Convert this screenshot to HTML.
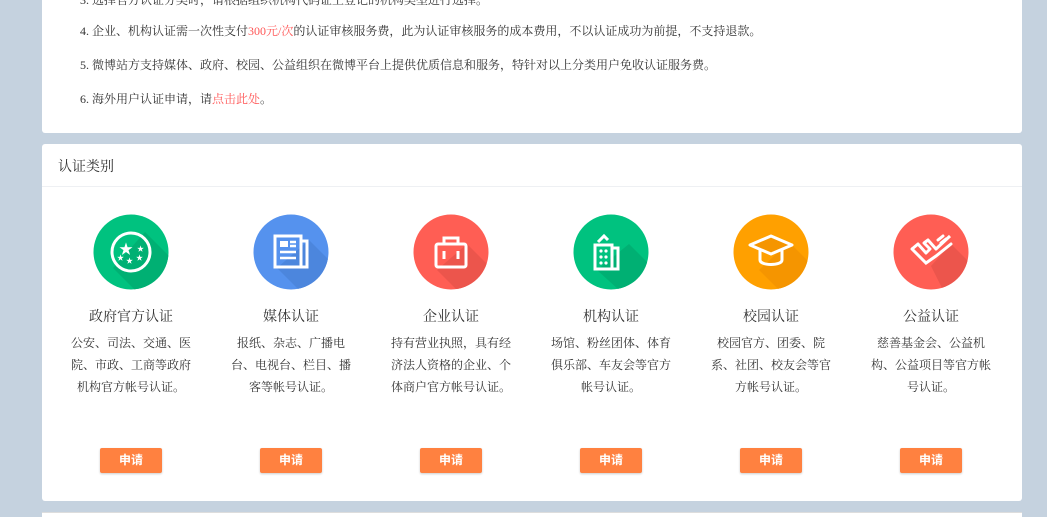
<!DOCTYPE html>
<html><head><meta charset="utf-8"><style>
*{margin:0;padding:0;box-sizing:border-box}
html,body{width:1047px;height:517px;overflow:hidden}
body{background:#c5d2df;font-family:"Liberation Serif","Noto Serif CJK SC",serif;color:#333;position:relative}
.p1{position:absolute;left:42px;top:-10px;width:980px;height:143px;background:#fff;border-radius:3px}
.p1 p{position:absolute;left:38px;font-size:12px;line-height:14px;white-space:nowrap}
.red{color:#f55}
.p2{position:absolute;left:42px;top:144px;width:980px;height:357px;background:#fff;border-radius:3px}
.hd{height:43px;border-bottom:1px solid #eef0f3;font-size:14px;padding:12px 0 0 16px;color:#333}
.col{position:absolute;top:70px;width:160px;height:270px;text-align:center}
.col svg{display:block;margin:0 auto}
.t{font-size:14px;margin-top:20px;line-height:16px;color:#333}
.d{font-size:12px;line-height:22px;margin:6px auto 0;width:122px;color:#333}
.btn{position:absolute;top:234px;left:49px;width:62px;height:25px;background:#ff8140;color:#fff;font-size:12px;font-weight:bold;line-height:25px;text-align:center;border-radius:2px;box-shadow:0 1px 2px rgba(0,0,0,.2);font-family:"Liberation Sans","Noto Sans CJK SC",sans-serif}
.p3{position:absolute;left:42px;top:512px;width:980px;height:5px;background:#fff;border-top:1px solid #ddd}
</style></head><body>
<div class="p1">
<p style="top:3px">3. 选择官方认证分类时，请根据组织机构代码证上登记的机构类型进行选择。</p>
<p style="top:34px">4. 企业、机构认证需一次性支付<span class="red">300元/次</span>的认证审核服务费，此为认证审核服务的成本费用，不以认证成功为前提，不支持退款。</p>
<p style="top:68px">5. 微博站方支持媒体、政府、校园、公益组织在微博平台上提供优质信息和服务，特针对以上分类用户免收认证服务费。</p>
<p style="top:102px">6. 海外用户认证申请，请<span class="red">点击此处</span>。</p>
</div>
<div class="p2">
<div class="hd">认证类别</div>

<div class="col" style="left:9px">
<svg width="76" height="76" viewBox="0 0 76 76"><defs><clipPath id="c1"><circle cx="38" cy="38" r="37.5"/></clipPath></defs><circle cx="38" cy="38" r="37.5" fill="#00c27f"/><polygon clip-path="url(#c1)" points="52,18 76,42 76,76 42,76 20,54" fill="#00b073"/><circle cx="38" cy="38" r="19" fill="none" stroke="#fff" stroke-width="3"/><text x="33" y="40" font-size="14" fill="#fff" text-anchor="middle">★</text><text x="44" y="37" font-size="7" fill="#fff">★</text><text x="43" y="46" font-size="7" fill="#fff">★</text><text x="33" y="49" font-size="7" fill="#fff">★</text><text x="24" y="46" font-size="7" fill="#fff">★</text></svg>
<div class="t">政府官方认证</div><div class="d">公安、司法、交通、医院、市政、工商等政府机构官方帐号认证。</div><div class="btn">申请</div></div>

<div class="col" style="left:169px">
<svg width="76" height="76" viewBox="0 0 76 76"><defs><clipPath id="c2"><circle cx="38" cy="38" r="37.5"/></clipPath></defs><circle cx="38" cy="38" r="37.5" fill="#5592ee"/><polygon clip-path="url(#c2)" points="56,26 76,46 76,76 46,76 24,54" fill="#4c86dd"/><rect x="22" y="22" width="26" height="31" fill="none" stroke="#fff" stroke-width="3"/><path d="M48 27h6v26h-6" fill="none" stroke="#fff" stroke-width="3"/><rect x="27" y="27" width="8" height="6" fill="#fff"/><path d="M37 28h6M37 32h6M27 38h16M27 44h16" stroke="#fff" stroke-width="2.5"/></svg>
<div class="t">媒体认证</div><div class="d">报纸、杂志、广播电台、电视台、栏目、播客等帐号认证。</div><div class="btn">申请</div></div>

<div class="col" style="left:329px">
<svg width="76" height="76" viewBox="0 0 76 76"><defs><clipPath id="c3"><circle cx="38" cy="38" r="37.5"/></clipPath></defs><circle cx="38" cy="38" r="37.5" fill="#ff5e54"/><polygon clip-path="url(#c3)" points="54,30 76,52 76,76 44,76 24,56" fill="#ec554c"/><rect x="23" y="30" width="30" height="23" rx="2" fill="none" stroke="#fff" stroke-width="3"/><path d="M31 30v-6h14v6" fill="none" stroke="#fff" stroke-width="3"/><path d="M31 37v8M45 37v8" stroke="#fff" stroke-width="3"/></svg>
<div class="t">企业认证</div><div class="d">持有营业执照，具有经济法人资格的企业、个体商户官方帐号认证。</div><div class="btn">申请</div></div>

<div class="col" style="left:489px">
<svg width="76" height="76" viewBox="0 0 76 76"><defs><clipPath id="c4"><circle cx="38" cy="38" r="37.5"/></clipPath></defs><circle cx="38" cy="38" r="37.5" fill="#00c27f"/><polygon clip-path="url(#c4)" points="56,30 76,50 76,76 46,76 24,56" fill="#00b073"/><rect x="22" y="31" width="17" height="24" fill="none" stroke="#fff" stroke-width="3"/><path d="M25 28l6-6 4 4" fill="none" stroke="#fff" stroke-width="3"/><path d="M39 34h6v21h-6" fill="none" stroke="#fff" stroke-width="3"/><g fill="#fff"><circle cx="28" cy="37" r="1.6"/><circle cx="33" cy="37" r="1.6"/><circle cx="28" cy="43" r="1.6"/><circle cx="33" cy="43" r="1.6"/><circle cx="28" cy="49" r="1.6"/><circle cx="33" cy="49" r="1.6"/></g></svg>
<div class="t">机构认证</div><div class="d">场馆、粉丝团体、体育俱乐部、车友会等官方帐号认证。</div><div class="btn">申请</div></div>

<div class="col" style="left:649px">
<svg width="76" height="76" viewBox="0 0 76 76"><defs><clipPath id="c5"><circle cx="38" cy="38" r="37.5"/></clipPath></defs><circle cx="38" cy="38" r="37.5" fill="#ffa000"/><polygon clip-path="url(#c5)" points="56,28 76,48 76,76 46,76 26,56" fill="#f59500"/><path d="M17 31l21-9 21 9-21 9z" fill="#f59500" stroke="#fff" stroke-width="3" stroke-linejoin="round"/><path d="M27 36v10c0 6 22 6 22 0V36" fill="none" stroke="#fff" stroke-width="3"/></svg>
<div class="t">校园认证</div><div class="d">校园官方、团委、院系、社团、校友会等官方帐号认证。</div><div class="btn">申请</div></div>

<div class="col" style="left:809px">
<svg width="76" height="76" viewBox="0 0 76 76"><defs><clipPath id="c6"><circle cx="38" cy="38" r="37.5"/></clipPath></defs><circle cx="38" cy="38" r="37.5" fill="#ff5e54"/><polygon clip-path="url(#c6)" points="38,52 58,30 76,48 76,76 50,76" fill="#ec554c"/><path d="M19 35l6-5 8 9 4-4-6-6 4-3 8 9 14-13" fill="none" stroke="#fff" stroke-width="3" stroke-linejoin="round"/><path d="M19 35l14 14 10-7 15-12M45 26l5-4M48 29l5-4" fill="none" stroke="#fff" stroke-width="3" stroke-linecap="round"/></svg>
<div class="t">公益认证</div><div class="d">慈善基金会、公益机构、公益项目等官方帐号认证。</div><div class="btn">申请</div></div>
</div>
<div class="p3"></div>
</body></html>
